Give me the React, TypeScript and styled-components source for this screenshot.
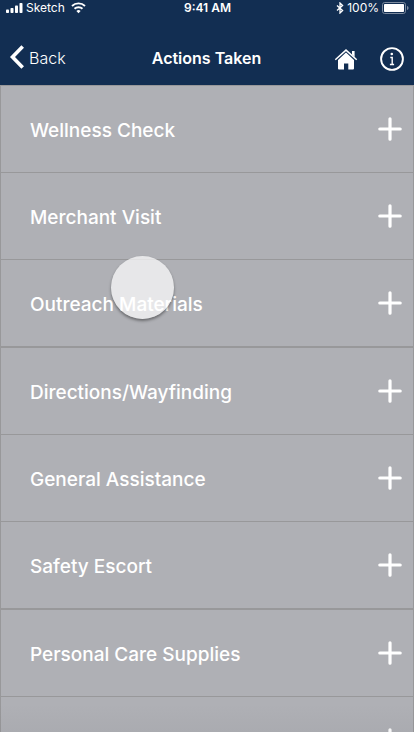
import React from "react";
import styled, { createGlobalStyle } from "styled-components";

const GlobalStyle = createGlobalStyle`
  * { box-sizing: border-box; }
  body {
    margin: 0;
    background: #afb0b5;
    font-family: Inter, "Liberation Sans", sans-serif;
    color: #fff;
  }
  button { font: inherit; color: inherit; }
`;

const Screen = styled.div`
  position: relative;
  display: flex;
  flex-direction: column;
  height: 100vh;
  overflow: hidden;
`;

const Header = styled.header`
  flex: none;
  background: #122e52;
`;

const StatusBar = styled.div`
  display: grid;
  grid-template-columns: 1fr auto 1fr;
  align-items: center;
  height: 16px;
  padding: 0 5px 0 6px;
  font-size: 12px;
  line-height: 16px;
`;

const StatusGroup = styled.div<{ $end?: boolean }>`
  display: flex;
  align-items: center;
  justify-content: ${(p) => (p.$end ? "flex-end" : "flex-start")};
  gap: 3px;
`;

const Time = styled.span`
  font-weight: 600;
`;

const Carrier = styled.span`
  margin-right: 3px;
`;

const NavBar = styled.nav`
  display: grid;
  grid-template-columns: 1fr auto 1fr;
  align-items: center;
  height: 69px;
  padding: 14px 10px 0 9px;
`;

const BackButton = styled.button`
  display: flex;
  align-items: center;
  justify-self: start;
  gap: 4px;
  padding: 0;
  border: 0;
  background: none;
  font-size: 16px;
  font-weight: 300;
  line-height: 24px;
`;

const Title = styled.h1`
  margin: 0;
  font-size: 16px;
  font-weight: 600;
  line-height: 24px;
`;

const NavActions = styled.div`
  display: flex;
  align-items: center;
  justify-self: end;
  gap: 22px;
  padding-top: 2px;
`;

const IconButton = styled.button`
  display: flex;
  padding: 0;
  border: 0;
  background: none;
`;

const List = styled.ul`
  margin: 0;
  padding: 0;
  list-style: none;
  border: 1px solid #98989a;
  border-bottom: 0;
`;

const Item = styled.li<{ $thick?: boolean }>`
  position: relative;
  border-bottom: ${(p) => (p.$thick ? 2 : 1)}px solid #98989a;
`;

const ActionButton = styled.button`
  display: flex;
  align-items: center;
  justify-content: space-between;
  width: 100%;
  height: 86px;
  padding: 0 11px 0 29px;
  border: 0;
  background: #afb0b5;
  font-size: 19px;
  font-weight: 500;
  line-height: 24px;
  text-align: left;
`;

const ActionLabel = styled.span`
  padding-top: 4px;
`;

const TouchPoint = styled.span`
  position: absolute;
  top: -4px;
  left: 110px;
  z-index: 1;
  width: 63px;
  height: 63px;
  border-radius: 50%;
  background: rgba(255, 255, 255, 0.7);
  box-shadow: 0 2px 3px rgba(0, 0, 0, 0.4);
  pointer-events: none;
`;

const BottomShade = styled.div`
  position: absolute;
  right: 0;
  bottom: 0;
  left: 0;
  height: 28px;
  background: linear-gradient(rgba(90, 90, 100, 0), rgba(90, 90, 100, 0.06));
  pointer-events: none;
`;

const SignalIcon = () => (
  <svg width="17" height="12" viewBox="0 0 17 12" fill="#fff" aria-hidden="true">
    <rect x="0" y="7.5" width="3" height="3.5" rx="0.8" />
    <rect x="4.5" y="6" width="3" height="5" rx="0.8" />
    <rect x="9" y="3.5" width="3" height="7.5" rx="0.8" />
    <rect x="13.5" y="1" width="3" height="10" rx="0.8" />
  </svg>
);

const WifiIcon = () => (
  <svg width="15" height="12" viewBox="0 0 15 12" fill="none" stroke="#fff" strokeWidth="1.9" aria-hidden="true">
    <path d="M1 4a9.3 9.3 0 0 1 13 0" />
    <path d="M3.500 6.800a5.800 5.800 0 0 1 8 0" />
    <path d="M7.500 11.200 5.400 9a3 3 0 0 1 4.200 0Z" fill="#fff" stroke="none" />
  </svg>
);

const BluetoothIcon = () => (
  <svg width="8" height="12" viewBox="0 0 8 12" fill="none" stroke="#fff" strokeWidth="1.300" aria-hidden="true">
    <path d="m1 3.400 5.600 5.100L4 11V1l2.600 2.500L1 8.600" />
  </svg>
);

const BatteryIcon = () => (
  <svg width="27" height="12" viewBox="0 0 27 12" aria-hidden="true">
    <rect x="0.5" y="0.5" width="23" height="11" rx="2.2" fill="none" stroke="#7c8a9e" />
    <rect x="2" y="2" width="20" height="8" rx="0.8" fill="#fff" />
    <path d="M25 4v4c1-.4 1.500-1.100 1.500-2S26 4.400 25 4Z" fill="#7c8a9e" />
  </svg>
);

const ChevronIcon = () => (
  <svg width="16" height="26" viewBox="0 0 16 26" fill="none" stroke="#fff" strokeWidth="3.600" aria-hidden="true">
    <path d="M13.700 1.500 3.500 12l10.200 10.500" />
  </svg>
);

const HomeIcon = () => (
  <svg width="24" height="22" viewBox="0 0 24 22" aria-hidden="true">
    <path d="m1.300 11.800 10.700-9.700 10.700 9.700" fill="none" stroke="#fff" strokeWidth="1.500" />
    <path d="M18 3h2.600v6L18 6.600Z" fill="#fff" />
    <path d="m12 4.600 8 7.300V20.500a1 1 0 0 1-1 1h-4.700V15.500h-4.300v6H5a1 1 0 0 1-1-1v-8.600Z" fill="#fff" />
  </svg>
);

const InfoIcon = () => (
  <svg width="24" height="24" viewBox="0 0 24 24" fill="none" stroke="#fff" aria-hidden="true">
    <circle cx="12" cy="12" r="10.900" strokeWidth="1.900" />
    <circle cx="11.800" cy="7" r="1.300" fill="#fff" stroke="none" />
    <path d="M10.300 10.500h1.900V17.500M9.900 17.500h4.200" strokeWidth="1.400" />
  </svg>
);

const PlusIcon = () => (
  <svg width="24" height="24" viewBox="0 0 24 24" stroke="#fff" strokeWidth="3.200" strokeLinecap="round" aria-hidden="true">
    <path d="M12 1.800v20.400M1.800 12h20.400" />
  </svg>
);

const actions = [
  { label: "Wellness Check" },
  { label: "Merchant Visit" },
  { label: "Outreach Materials", thick: true, touched: true },
  { label: "Directions/Wayfinding" },
  { label: "General Assistance" },
  { label: "Safety Escort", thick: true },
  { label: "Personal Care Supplies" },
];

export default function App() {
  return (
    <>
      <GlobalStyle />
      <Screen>
        <Header>
          <StatusBar>
            <StatusGroup>
              <SignalIcon />
              <Carrier>Sketch</Carrier>
              <WifiIcon />
            </StatusGroup>
            <Time>9:41 AM</Time>
            <StatusGroup $end>
              <BluetoothIcon />
              <span>100%</span>
              <BatteryIcon />
            </StatusGroup>
          </StatusBar>
          <NavBar>
            <BackButton type="button">
              <ChevronIcon />
              Back
            </BackButton>
            <Title>Actions Taken</Title>
            <NavActions>
              <IconButton type="button" aria-label="Home">
                <HomeIcon />
              </IconButton>
              <IconButton type="button" aria-label="Information">
                <InfoIcon />
              </IconButton>
            </NavActions>
          </NavBar>
        </Header>
        <List>
          {actions.map((action) => (
            <Item key={action.label} $thick={action.thick}>
              <ActionButton type="button">
                <ActionLabel>{action.label}</ActionLabel>
                <PlusIcon />
              </ActionButton>
              {action.touched && <TouchPoint />}
            </Item>
          ))}
          <Item>
            <ActionButton type="button" aria-label="Other">
              <ActionLabel />
              <PlusIcon />
            </ActionButton>
          </Item>
        </List>
        <BottomShade />
      </Screen>
    </>
  );
}
